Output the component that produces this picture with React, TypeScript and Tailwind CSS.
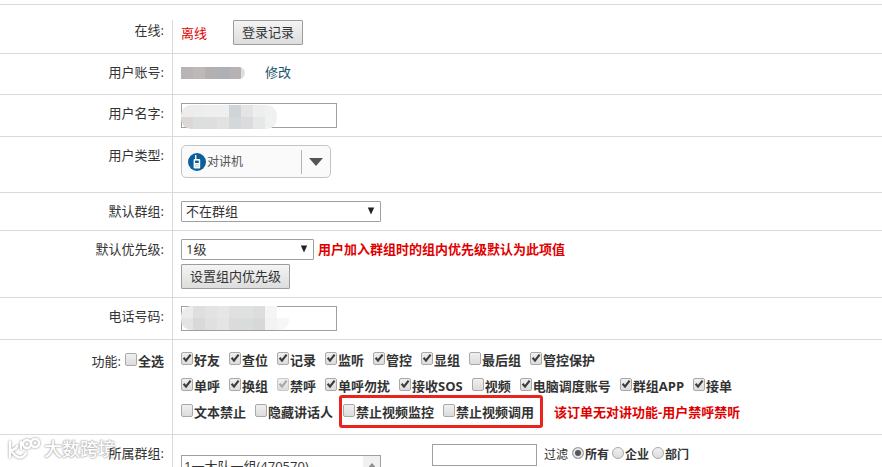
import type { ReactNode } from "react";

type Feature = { name: string; on?: boolean; disabled?: boolean };

const featuresTop: Feature[] = [
  { name: "好友", on: true },
  { name: "查位", on: true },
  { name: "记录", on: true },
  { name: "监听", on: true },
  { name: "管控", on: true },
  { name: "显组", on: true },
  { name: "最后组" },
  { name: "管控保护", on: true },
];

const featuresMiddle: Feature[] = [
  { name: "单呼", on: true },
  { name: "换组", on: true },
  { name: "禁呼", on: true, disabled: true },
  { name: "单呼勿扰", on: true },
  { name: "接收SOS", on: true },
  { name: "视频" },
  { name: "电脑调度账号", on: true },
  { name: "群组APP", on: true },
  { name: "接单", on: true },
];

const featuresBottom: Feature[] = [{ name: "文本禁止" }, { name: "隐藏讲话人" }];
const featuresVideo: Feature[] = [{ name: "禁止视频监控" }, { name: "禁止视频调用" }];

function Row({ label, first, children }: { label: ReactNode; first?: boolean; children: ReactNode }) {
  return (
    <div className={`flex border-t border-[#dadada] ${first ? "pt-[15px]" : ""}`}>
      <div className={`w-[172px] shrink-0 pr-2 text-right leading-5 ${first ? "" : "pt-2"}`}>{label}</div>
      <div className="min-w-0 flex-1 border-l border-[#dadada] pl-2">{children}</div>
    </div>
  );
}

function Check({ name, on, disabled }: Feature) {
  return (
    <label className="flex items-center whitespace-nowrap font-bold leading-[26px]">
      <span className="relative mb-1 block h-[13px] w-[13px]">
        <input
          type="checkbox"
          defaultChecked={on}
          disabled={disabled}
          className="peer block h-[13px] w-3 appearance-none rounded-[2px] border border-[#a9a9a9] bg-linear-to-b from-[#f0f0f0] to-[#dcdcdc] disabled:border-[#c8c8c8]"
        />
        <svg
          viewBox="0 0 12 12"
          className="pointer-events-none absolute left-0 top-0 hidden h-3 w-3 text-[#3c3c3c] peer-checked:block peer-disabled:text-[#a8a8a8]"
        >
          <path d="M2.6 5.8 5 8.6 9.6 2.6" fill="none" stroke="currentColor" strokeWidth="2.2" />
        </svg>
      </span>
      {name}
    </label>
  );
}

function Radio({ name, on }: Feature) {
  return (
    <label className="flex items-center whitespace-nowrap text-xs font-bold leading-5">
      <input
        type="radio"
        name="filter"
        defaultChecked={on}
        className="mb-1 mr-px h-3 w-3 appearance-none rounded-full border border-[#a9a9a9] bg-linear-to-b from-[#f0f0f0] to-[#dcdcdc] checked:bg-none checked:bg-[#555] checked:shadow-[inset_0_0_0_2px_#e8e8e8]"
      />
      {name}
    </label>
  );
}

function Select({ label, option, className }: { label: string; option: string; className: string }) {
  return (
    <div className={`relative ${className}`}>
      <select
        aria-label={label}
        className="block h-[21px] w-full appearance-none rounded-[1px] border border-[#a0a0a0] bg-white pl-1 leading-[19px]"
      >
        <option>{option}</option>
      </select>
      <svg viewBox="0 0 8 8" className="pointer-events-none absolute right-[6px] top-[6px] h-2 w-2">
        <path d="M0.8 0.5h6.4L4 7.5z" fill="#222" />
      </svg>
    </div>
  );
}

function Button({ children }: { children: ReactNode }) {
  return (
    <button className="block h-[25px] rounded-[1px] border border-[#9c9c9c] bg-linear-to-b from-[#f4f4f4] to-[#dddddd] px-[8px] leading-[23px]">
      {children}
    </button>
  );
}

function Mosaic({ rows, cell, className }: { rows: string[][]; cell: number; className: string }) {
  return (
    <div className={`overflow-hidden ${className}`}>
      {rows.map((row, r) => (
        <div key={r} className="flex h-3">
          {row.map((color, c) => (
            <div key={c} className="h-3 shrink-0" style={{ width: cell, backgroundColor: color }} />
          ))}
        </div>
      ))}
    </div>
  );
}

const accountMosaic = [["#b9b5b7", "#beb8b6", "#b3b0b2", "#adb0b4", "#b6b2b4", "#dedede"]];

const nameMosaic = [
  ["#ececec", "#ededed", "#efefef", "#efefef", "#cfd5d7", "#e2e4e5", "#eeeeee", "#f1f1f1"],
  ["#dbd8d6", "#dcdfe0", "#dedede", "#e1e2e2", "#d3d9db", "#dcdadc", "#e6e8e8", "#f0f1f1"],
];

const phoneMosaic = [
  ["#ececec", "#dfdfdf", "#e3e3e3", "#e6e6e6", "#e0e0e0", "#dfe1e1", "#dddddd", "#f4f5f5", "#f6f6f600"],
  ["#e4e4e4", "#d9d9d9", "#e0e0e0", "#e4e4e4", "#dadcdc", "#d9dcdc", "#d8d8d8", "#f2f3f3", "#f6f6f6"],
];

export default function App() {
  return (
    <main className="relative isolate h-screen overflow-hidden bg-white pt-1 font-['Open_Sans','Noto_Sans_CJK_SC',sans-serif] text-[13px] text-[#333]">
      <div className="pointer-events-none absolute left-2 top-[437px] -z-10 flex items-center gap-1 text-lg font-medium leading-6 text-white [text-shadow:0_0_2px_#aaa,0_0_2px_#aaa,0_0_1px_#bbb]">
        <svg
          viewBox="0 0 32 22"
          className="h-[22px] w-8 drop-shadow-[0_0_1px_#888]"
          fill="none"
          stroke="#fff"
          strokeWidth="2.4"
          strokeLinecap="round"
        >
          <path d="M2 4v15M3 12c2 0 5-1 6-4M3 12c4 7 11 11 15 3M13 4v7" />
          <circle cx="19" cy="6" r="4" />
          <circle cx="27" cy="5" r="4" />
        </svg>
        大数跨境
      </div>

      <Row label="在线:" first>
        <div className="flex h-[33px] items-start gap-[26px]">
          <span className="leading-[26px] text-[#e00000]">离线</span>
          <Button>登录记录</Button>
        </div>
      </Row>

      <Row label="用户账号:">
        <div className="flex gap-5 pb-3 pt-2 leading-5">
          <Mosaic rows={accountMosaic} cell={12} className="mt-[5px] h-3 w-16 rounded-r-md" />
          <a href="#edit" className="text-[#15546b]">
            修改
          </a>
        </div>
      </Row>

      <Row label={<label htmlFor="user-name">用户名字:</label>}>
        <div className="relative py-2">
          <input id="user-name" className="block h-[25px] w-[156px] border border-[#a0a0a0]" />
          <Mosaic rows={nameMosaic} cell={12} className="absolute left-0 top-[10px] w-24 rounded-[10px]" />
        </div>
      </Row>

      <Row label="用户类型:">
        <div className="pb-[14px] pt-[8px]">
          <button className="flex h-[33px] w-[150px] items-center rounded-[5px] border border-[#c4c4c4] bg-[#fafafa] pl-[6px] text-xs text-[#555]">
            <svg viewBox="0 0 18 18" className="h-[18px] w-[18px]">
              <circle cx="9" cy="9" r="9" fill="#0d5f9c" />
              <rect x="7" y="2" width="1.4" height="5" fill="#fff" />
              <rect x="5.6" y="6" width="6.6" height="9.5" rx="1" fill="#fff" />
              <rect x="7" y="7.6" width="3.8" height="2.4" fill="#0d5f9c" />
              <path d="M7 11.6h3.8M7 13.3h3.8" stroke="#8ab2cf" strokeWidth="0.6" />
            </svg>
            <span className="ml-px flex-1 text-left">对讲机</span>
            <span className="flex h-6 w-[29px] items-center justify-center border-l border-[#b4b4b4]">
              <svg viewBox="0 0 14 8" className="h-2 w-[14px]">
                <path d="M0 0h14L7 8z" fill="#555" />
              </svg>
            </span>
          </button>
        </div>
      </Row>

      <Row label="默认群组:">
        <div className="py-2">
          <Select label="默认群组" option="不在群组" className="w-[200px]" />
        </div>
      </Row>

      <Row label="默认优先级:">
        <div className="pb-2 pt-2">
          <div className="mb-1 flex items-center gap-1">
            <Select label="默认优先级" option="1级" className="w-[133px]" />
            <span className="font-bold leading-[21px] text-[#e00000]">用户加入群组时的组内优先级默认为此项值</span>
          </div>
          <Button>设置组内优先级</Button>
        </div>
      </Row>

      <Row label={<label htmlFor="phone">电话号码:</label>}>
        <div className="relative py-2">
          <input id="phone" className="block h-[25px] w-[156px] border border-[#a0a0a0]" />
          <Mosaic rows={phoneMosaic} cell={12} className="absolute left-0 top-2 w-[108px] rounded-[10px]" />
        </div>
      </Row>

      <Row
        label={
          <div className="flex items-center justify-end gap-1">
            <span>功能:</span>
            <Check name="全选" />
          </div>
        }
      >
        <div className="pb-[9px] pt-[7px]">
          <div className="flex gap-[9px]">
            {featuresTop.map((f) => (
              <Check key={f.name} {...f} />
            ))}
          </div>
          <div className="flex gap-[9px]">
            {featuresMiddle.map((f) => (
              <Check key={f.name} {...f} />
            ))}
          </div>
          <div className="flex gap-[9px]">
            {featuresBottom.map((f) => (
              <Check key={f.name} {...f} />
            ))}
            <div className="relative flex gap-[9px] px-px">
              {featuresVideo.map((f) => (
                <Check key={f.name} {...f} />
              ))}
              <div className="pointer-events-none absolute -bottom-[3px] -left-[3px] -right-2 -top-1 rounded-[3px] border-[3px] border-[#e8241c]" />
            </div>
            <span className="pl-[10px] font-bold leading-[26px] text-[#e00000]">该订单无对讲功能-用户禁呼禁听</span>
          </div>
        </div>
      </Row>

      <Row label="所属群组:">
        <div className="flex items-start pt-[9px]">
          <div className="relative mt-[11px] w-[200px]">
            <select
              size={4}
              aria-label="所属群组"
              className="block w-full overflow-hidden border border-[#a0a0a0] bg-white leading-4"
            >
              <option className="px-[2px]">1一大队一组(470570)</option>
            </select>
            <div className="absolute bottom-px right-px top-px flex w-[17px] justify-center bg-[#f0f0f0] pt-[7px]">
              <svg viewBox="0 0 10 6" className="h-[6px] w-[10px]">
                <path d="M0 6 5 0l5 6z" fill="#8c8c8c" />
              </svg>
            </div>
          </div>
          <input aria-label="过滤" className="ml-[51px] h-[22px] w-[105px] border border-[#a0a0a0]" />
          <div className="ml-[7px] mt-px flex gap-1">
            <span className="text-xs leading-5">过滤</span>
            <div className="flex gap-[3px]">
              <Radio name="所有" on />
              <Radio name="企业" />
              <Radio name="部门" />
            </div>
          </div>
        </div>
      </Row>
    </main>
  );
}
